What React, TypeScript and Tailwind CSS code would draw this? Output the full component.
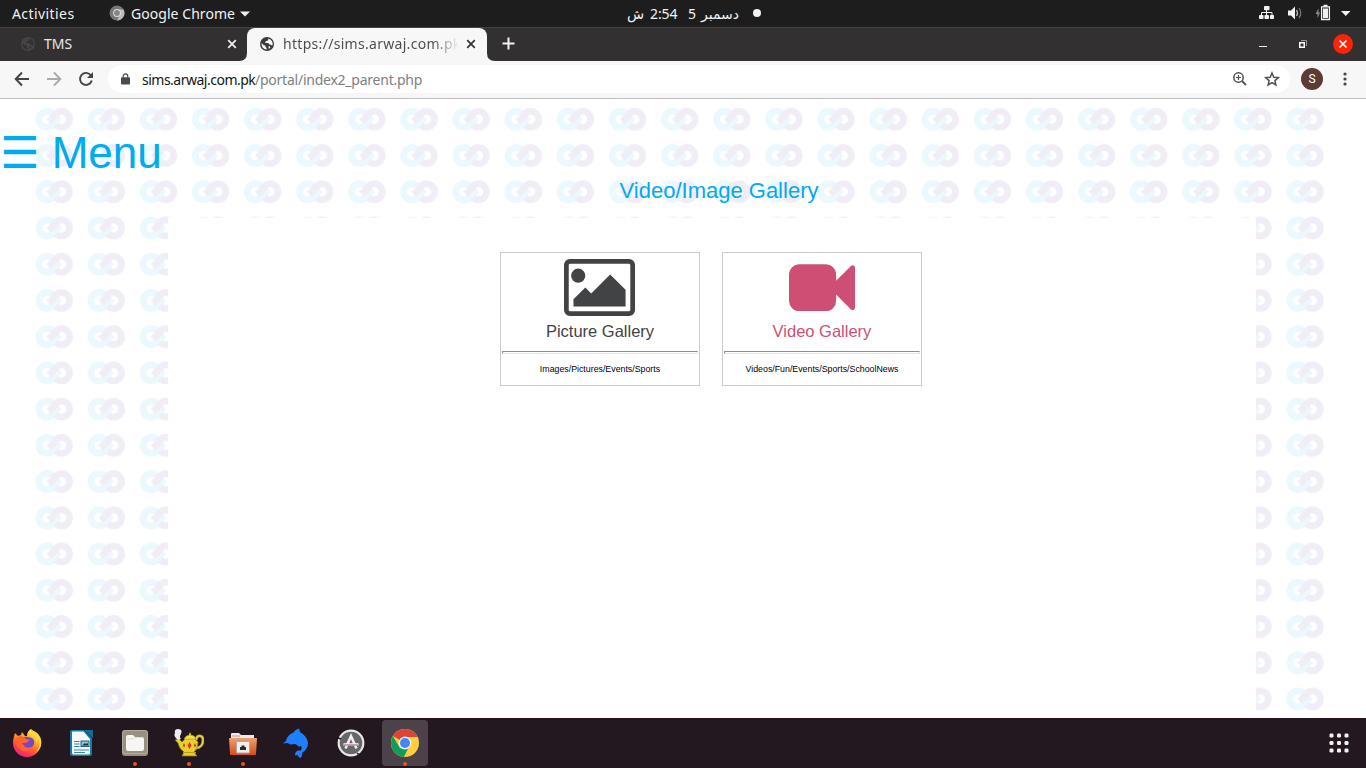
import type { ReactNode } from "react";

const ubuntu = "font-['Noto_Sans','Open_Sans',sans-serif]";

function Globe({ fill, cut }: { fill: string; cut: string }) {
  return (
    <svg width="14" height="14" viewBox="0 0 14 14" className="shrink-0">
      <circle cx="7" cy="7" r="7" fill={fill} />
      <path d="M1.500 6 3.800 8.300l1.600.1v1.300l1.200 1.300v1.600A5.700 5.700 0 0 1 1.500 6zM8.300 1.400v1.400L7.200 4.100H5.700v1.100l-.9.9h3.500l1 1.300h1.100l.8.800h1.400A5.800 5.800 0 0 0 8.300 1.400zM8.500 9.300h1.300l.5 1.500-1.500 1.200z" fill={cut} />
    </svg>
  );
}

function Cross({ color }: { color: string }) {
  return (
    <svg width="10" height="10" viewBox="0 0 10 10" className="shrink-0">
      <path d="M1.200 1.200l7.600 7.600M8.800 1.200 1.200 8.800" stroke={color} strokeWidth="1.700" />
    </svg>
  );
}

function TopBar() {
  return (
    <div className={`relative flex h-[27px] shrink-0 items-center bg-[#1d1d1d] text-[14px] leading-[27px] text-[#f2f2f2] ${ubuntu}`}>
      <span className="ml-3 w-[97px] whitespace-nowrap tracking-[0.42px]">Activities</span>
      <svg width="16" height="16" viewBox="0 0 16 16" className="mb-px shrink-0">
        <circle cx="8" cy="8" r="7.500" fill="#777" />
        <path d="M8 4.500h6.600A7.500 7.500 0 0 1 8 15.500l3-5.700z" fill="#bcbcbc" />
        <circle cx="8" cy="8" r="3.900" fill="#ddd" />
        <circle cx="8" cy="8" r="2.900" fill="#858585" />
      </svg>
      <span className="ml-1.5 w-[106px] whitespace-nowrap tracking-[0.05px]">Google Chrome</span>
      <svg width="10" height="6" viewBox="0 0 10 6" className="ml-[3px] shrink-0"><path d="M0 .5h10L5 5.500z" fill="#f2f2f2" /></svg>
      <div className="ml-[377px] flex w-[135px] items-center pb-px whitespace-nowrap font-['Noto_Sans','DejaVu_Sans',sans-serif]">
        <span className="w-[23px]">ش</span>
        <span className="w-[38px] tracking-[-0.1px]">2:54</span>
        <span className="w-3">5</span>
        <span className="w-[39px]" dir="rtl">دسمبر</span>
        <span className="ml-[14px] h-2 w-2 shrink-0 rounded-full bg-[#f2f2f2]" />
      </div>
      <svg width="108" height="27" viewBox="1258 0 108 27" className="ml-auto shrink-0">
        <g fill="#f2f2f2">
          <rect x="1264" y="6" width="5.500" height="4.200" rx=".8" />
          <rect x="1259" y="15" width="4.500" height="4" rx=".8" />
          <rect x="1264.500" y="15" width="4.500" height="4" rx=".8" />
          <rect x="1270" y="15" width="4" height="4" rx=".8" />
          <path d="M1288 10.500h3l4-4v13l-4-4h-3z" />
          <path d="M1341 11h9.500l-4.750 5z" />
          <rect x="1323" y="8.500" width="5" height="9.500" />
        </g>
        <path d="M1266.500 10v5M1261.500 15v-2.500h10.500V15" fill="none" stroke="#f2f2f2" />
        <path d="M1296.500 10q2 3 0 6" fill="none" stroke="#bbb" strokeWidth="1.300" />
        <path d="M1299 8q3.500 5 0 10" fill="none" stroke="#777" strokeWidth="1.300" />
        <path d="M1323.500 5.500h4M1321.600 6.800h7.800v12.700h-7.800z" fill="none" stroke="#f2f2f2" strokeWidth="1.300" />
        <path d="M1318.500 8.500l-3 5.500h2v4.500l2.500-6h-1.500z" fill="#8b8b8b" />
      </svg>
    </div>
  );
}

function TabStrip() {
  return (
    <div className={`flex h-[34px] shrink-0 border-t border-[#464344] bg-[#323031] text-[14px] leading-[33px] ${ubuntu}`}>
      <div className="flex w-[247px] items-center pb-[2px]">
        <span className="ml-[21px] flex"><Globe fill="#454545" cut="#323031" /></span>
        <span className="ml-[9px] text-[#e8e8e8]">TMS</span>
        <span className="mr-[10px] ml-auto flex"><Cross color="#f0f0f0" /></span>
      </div>
      <div className="relative flex w-[240px] items-center rounded-t-lg bg-[#f7f7f7] pb-[2px]">
        <svg width="8" height="8" viewBox="0 0 8 8" className="absolute bottom-0 -left-2"><path d="M8 0v8H0q8 0 8-8z" fill="#f7f7f7" /></svg>
        <svg width="8" height="8" viewBox="0 0 8 8" className="absolute -right-2 bottom-0"><path d="M0 0v8h8q-8 0-8-8z" fill="#f7f7f7" /></svg>
        <span className="ml-[13px] flex"><Globe fill="#3b3b3b" cut="#f7f7f7" /></span>
        <span className="ml-[9px] w-[176px] overflow-hidden bg-linear-to-r from-[#4a4a4a] from-85% to-transparent bg-clip-text whitespace-nowrap tracking-[0.3px] text-transparent">https://sims.arwaj.com.pk</span>
        <span className="ml-[7px] flex"><Cross color="#333" /></span>
      </div>
      <svg width="13" height="13" viewBox="0 0 13 13" className="mt-[9px] ml-[15px]"><path d="M6.500 .5v12M.5 6.500h12" stroke="#f3f3f3" strokeWidth="2" /></svg>
      <svg width="108" height="33" viewBox="1258 28 108 33" className="ml-auto">
        <path d="M1259 46.500h8" stroke="#eee" />
        <path d="M1301 40.500h5.500v5.500" fill="none" stroke="#999" />
        <rect x="1299.750" y="42.750" width="4.500" height="4.500" fill="none" stroke="#fff" strokeWidth="1.500" />
        <circle cx="1343" cy="44" r="10" fill="#ff2306" />
        <path d="M1339.500 40.500l7 7M1346.500 40.500l-7 7" stroke="#fff" strokeWidth="1.700" />
      </svg>
    </div>
  );
}

function Toolbar() {
  return (
    <div className="flex h-[38px] shrink-0 items-center border-b border-[#bdbdbd] bg-[#f7f7f7] pb-px">
      <svg width="108" height="36" viewBox="0 61 108 36" fill="none" strokeWidth="1.900" className="shrink-0">
        <path d="M29 79H16M22 72.500 15.700 79l6.300 6.500" stroke="#444" />
        <path d="M47 79h13M54 72.500 60.300 79 54 85.500" stroke="#aaa" />
        <path d="M91 75.500a6 6 0 1 0 .8 5" stroke="#444" />
        <path d="M93 72v6h-6z" fill="#444" />
      </svg>
      <div className="flex h-7 w-[1182px] shrink-0 items-center rounded-full bg-white">
        <svg width="9" height="12" viewBox="0 0 10 13" className="ml-[13px] shrink-0">
          <rect x="0" y="4.500" width="10" height="8" rx="1" fill="#4b4b4b" />
          <path d="M2.500 5V3.300a2.500 2.500 0 0 1 5 0V5" fill="none" stroke="#4b4b4b" strokeWidth="1.300" />
        </svg>
        <span className={`ml-3 text-[14px] whitespace-nowrap text-[#808080] ${ubuntu}`}>
          <span className="inline-block w-[113px] tracking-[-0.5px] text-[#151515]">sims.arwaj.com.pk</span>
          <span className="tracking-[-0.24px]">/portal/index2_parent.php</span>
        </span>
        <svg width="50" height="28" viewBox="1232 65 50 28" fill="none" stroke="#505050" className="mr-2 ml-auto shrink-0">
          <circle cx="1238.500" cy="77.500" r="4.700" strokeWidth="1.500" />
          <path d="M1242 81l4 4" strokeWidth="1.800" />
          <path d="M1236 77.500h5M1238.500 75v5" strokeWidth="1.200" />
          <path d="M1272 73l1.800 4.200 4.500.4-3.400 3 1 4.400-3.900-2.400-3.900 2.400 1-4.400-3.400-3 4.500-.4z" strokeWidth="1.500" />
        </svg>
      </div>
      <div className="ml-[11px] flex h-[22px] w-[22px] items-center justify-center rounded-full bg-[#5d3a33] font-['Roboto',sans-serif] text-[12px] text-white">S</div>
      <svg width="4" height="14" viewBox="0 0 4 14" fill="#444" className="ml-[20px]"><circle cx="2" cy="2" r="1.600" /><circle cx="2" cy="7" r="1.600" /><circle cx="2" cy="12" r="1.600" /></svg>
    </div>
  );
}

function Backdrop() {
  return (
    <svg width="1366" height="619" className="absolute inset-0">
      <defs>
        <pattern id="links" x="35.500" y="2" width="52.120" height="36.230" patternUnits="userSpaceOnUse">
          <g fill="none" strokeWidth="6.800">
            <circle cx="11.400" cy="18.300" r="8" stroke="#ebf8fe" />
            <circle cx="26" cy="18.300" r="8" stroke="#f1edf6" />
            <path d="M15.200 24.800l9-8.600" stroke="#ebf8fe" />
            <path d="M13.200 20.600l8.800-8" stroke="#f1edf6" />
          </g>
        </pattern>
      </defs>
      <rect x="35.500" y="2" width="1290" height="617" fill="url(#links)" />
    </svg>
  );
}

function Card({ title, caption, color, children }: { title: string; caption: string; color: string; children: ReactNode }) {
  return (
    <div className="flex h-[134px] w-[200px] flex-col items-center border border-[#ccc] bg-white px-px">
      <div className="flex h-[69px] items-center">{children}</div>
      <div className={`h-[29px] text-[16.5px] leading-[19px] ${color}`}>{title}</div>
      <div className="h-[3px] w-full border border-[#e5e5e5] border-t-[#8e8e8e] border-l-[#8e8e8e]" />
      <div className="mt-[10px] text-[8.800px] leading-[11px] text-black">{caption}</div>
    </div>
  );
}

function Page() {
  return (
    <main className="relative h-[619px] shrink-0 overflow-hidden bg-white font-['Liberation_Sans',Arial,sans-serif]">
      <Backdrop />
      <div className="relative flex h-full flex-col">
        <div className="mt-[29px] h-[49px] text-[44px] leading-[50px] whitespace-nowrap text-[#00abf0]">
          <span className="font-['DejaVu_Sans']">☰</span> Menu
        </div>
        <h1 className="h-[41px] pl-[72px] text-center text-[22px] leading-[27px] text-[#00abf0]">Video/Image Gallery</h1>
        <section className="ml-[168px] flex w-[1088px] flex-1 items-start gap-[22px] bg-white pt-[34px] pl-[332px]">
          <Card title="Picture Gallery" caption="Images/Pictures/Events/Sports" color="text-[#424344]">
            <svg width="72" height="57" viewBox="0 128 1946 1536" fill="#424344">
              <path d="M576 576q0 80-56 136t-136 56-136-56-56-136 56-136 136-56 136 56 56 136zM1664 960v448H256v-192l320-320 160 160 512-512zM1760 256H160q-13 0-22.500 9.500T128 288v1216q0 13 9.500 22.500t22.500 9.500h1600q13 0 22.500-9.500t9.500-22.500V288q0-13-9.500-22.500T1760 256zM1920 288v1216q0 66-47 113t-113 47H160q-66 0-113-47T0 1504V288q0-66 47-113t113-47h1600q66 0 113 47t47 113z" />
            </svg>
          </Card>
          <Card title="Video Gallery" caption="Videos/Fun/Events/Sports/SchoolNews" color="text-[#cf4f74]">
            <svg width="66" height="47.500" viewBox="0 256 1792 1280" fill="#cf4f74">
              <path d="M1792 352v1088q0 42-39 59-13 5-25 5-27 0-45-19l-403-403v166q0 119-84.500 203.500T992 1536H288q-119 0-203.500-84.500T0 1248V544q0-119 84.500-203.500T288 256h704q119 0 203.500 84.500T1280 544v165l403-402q18-19 45-19 12 0 25 5 39 17 39 59z" />
            </svg>
          </Card>
        </section>
      </div>
    </main>
  );
}

const icons: { name: string; open?: boolean; active?: boolean; art: ReactNode }[] = [
  {
    name: "firefox",
    art: (
      <>
        <defs>
          <linearGradient id="ff" x1=".8" y1="0" x2=".25" y2="1"><stop offset=".15" stopColor="#ffdf43" /><stop offset=".5" stopColor="#ff8424" /><stop offset=".78" stopColor="#ff3850" /><stop offset="1" stopColor="#e92083" /></linearGradient>
        </defs>
        <path d="M3 6l3 3 3-1 1-3 3 4 2 0c0-4 2-6 4-7 1 4 4 5 5 7 1-1 1-2 1-3 3 4 4 7 4 10a14 14 0 0 1-28 0c0-4 1-7 2-10z" fill="url(#ff)" />
        <path d="M10 11q3-2 6-1l4 1q3 2 2 6-2 5-7 5-6-1-6-6l4-1 2-2-4-1z" fill="#7049c9" />
        <path d="M4 11q4-3 8-1l2 2 4 1-4 3-4 0 3 4q5 2 9-2-3 8-11 6-6-3-7-9z" fill="#ff6330" />
        <path d="M19 2c0 7 6 6 5 14 2-2 2-4 1-6 4 6 3 11-1 15 7-4 7-14 1-19-2-2-4-2-6-4z" fill="#ffd638" />
      </>
    ),
  },
  {
    name: "writer",
    art: (
      <>
        <path d="M6 3h12l8 8v16q0 2-2 2H6q-2 0-2-2V5q0-2 2-2z" fill="#1679a8" />
        <path d="M6.500 4.500h11l6.500 7.500V26q0 1.500-1.500 1.500h-15q-1.500 0-1.500-1.500V5.500q0-1 .5-1z" fill="#f4f8fa" />
        <path d="M18 3h9v8z" fill="#126b98" />
        <path d="M8 14.500h5.500M8 17h5.500M8 19.500h5.500M8 23h15M8 25.500h11" stroke="#3d85aa" strokeWidth="1.200" />
        <rect x="15" y="14" width="8" height="5.500" fill="#86c5e5" stroke="#285f7b" />
        <path d="M16 18.500l3-2.500 1 1 2-1v2.500z" fill="#28313a" />
      </>
    ),
  },
  {
    name: "files",
    open: true,
    art: (
      <>
        <rect x="2" y="3" width="26" height="26" rx="3" fill="#99917f" />
        <rect x="2.500" y="3.500" width="25" height="23" rx="3" fill="none" stroke="#b4ad9f" />
        <path d="M8 8h5l2 2h7q2 0 2 2v10q0 2-2 2H8q-2 0-2-2V10q0-2 2-2z" fill="#f7f6f4" />
        <path d="M7 12h6l2-1.500h8" fill="none" stroke="#dedbd4" />
      </>
    ),
  },
  {
    name: "lamp",
    open: true,
    art: (
      <>
        <path d="M22 13c1-6 7-5 7 0s-3 8-7 8" fill="none" stroke="#b49d27" strokeWidth="2.800" />
        <path d="M22 13c1-6 7-5 7 0s-3 8-7 8" fill="none" stroke="#ecd643" strokeWidth="1.400" />
        <path d="M1 13l4-1 3 3 4-4h8l4 4q0 7-4 10l3 4H8l2-4q-5-3-6-9z" fill="#e5d02c" stroke="#8c7913" strokeWidth=".8" />
        <path d="M10 12q2-4 6-4 5 0 6 4z" fill="#f4e44f" stroke="#a89420" strokeWidth=".6" />
        <path d="M16 5l1.200 3h-2.400z" fill="#ebda43" />
        <path d="M9 25.500h13" stroke="#b99e1f" />
        <path d="M4 13Q-1 9 1 6q-1-4 3-4 5 0 3 5-2 3 0 5z" fill="#ecedf4" />
        <path d="M15.500 15l2 3.500-2 3.500-2-3.500zM10 16l1.200 2.500-1.200 2-1.200-2zM21 16l1.200 2.500-1.200 2-1.200-2z" fill="#df3030" />
      </>
    ),
  },
  {
    name: "network-folder",
    open: true,
    art: (
      <>
        <defs><linearGradient id="folder" x1="0" y1="0" x2="0" y2="1"><stop stopColor="#e8a373" /><stop offset="1" stopColor="#dc4b12" /></linearGradient></defs>
        <path d="M3 7q0-1 1-1h7l2 2h13v9H3z" fill="#eeeae8" />
        <path d="M4 9h8" stroke="#f4b8ad" strokeWidth="2" />
        <path d="M1 11h28l-1 16q0 1-1 1H3q-1 0-1-1z" fill="url(#folder)" />
        <rect x="8.500" y="14.500" width="13" height="11.500" rx="1" fill="#eee" stroke="#aaa" />
        <path d="M12 23v-3h1.500v-1.500h3V20H18v3z" fill="#292d22" />
      </>
    ),
  },
  {
    name: "dolphin",
    art: <path d="M.8 16.500 4 14Q5 8 11.500 5.500 13 2.500 17 1.500L18 5q7 4 8 11 0 6-5.500 9.500L19.500 30 18 31l-3-3-2 .5q0-4 3-5h3q1.500-3-.5-5l-1 1.500-4-3-5 .5-3-1.500z" fill="#1f80ff" />,
  },
  {
    name: "updater",
    art: (
      <>
        <circle cx="15" cy="16" r="13.400" fill="#ecebeb" />
        <circle cx="15" cy="16" r="11.300" fill="#686667" />
        <path d="M1 10.500l4 1.500M21 26l3 2.500" stroke="#231720" strokeWidth="1.600" />
        <path d="M9.500 21.500 15 9l5.500 12.500" fill="none" stroke="#f3f2f2" strokeWidth="2.500" />
        <path d="M7.500 17.500h15" stroke="#f4eff5" strokeWidth="2.600" />
        <path d="M8 18h14" stroke="#925189" />
      </>
    ),
  },
  {
    name: "chrome",
    open: true,
    active: true,
    art: (
      <>
        <circle cx="15" cy="16" r="14" fill="#ffcd40" />
        <path d="M15 16L2.900 9A14 14 0 0 1 27.600 10H15z" fill="#db4437" />
        <path d="M2.900 9l7 12 5 1 4-2-5 10A14 14 0 0 1 2.900 9z" fill="#0f9d58" />
        <circle cx="15" cy="16" r="6.400" fill="#f1f1f1" />
        <circle cx="15" cy="16" r="5" fill="#4285f4" />
      </>
    ),
  },
];

function Dock() {
  return (
    <footer className="flex h-[50px] shrink-0 items-start bg-[#231720] px-1 pt-[2px]">
      <div className="flex gap-2">
        {icons.map((item) => (
          <div key={item.name} className={`relative flex h-[46px] w-[46px] justify-center rounded pt-[7px] ${item.active ? "bg-[#4c434a]" : ""}`}>
            <svg width="30" height="32" viewBox="0 0 30 32">{item.art}</svg>
            {item.open && <span className="absolute bottom-0 left-[21px] h-1 w-1 rounded-full bg-[#e95420]" />}
          </div>
        ))}
      </div>
      <svg width="20" height="20" viewBox="0 0 20 20" fill="#f3f1f2" className="mt-[13px] mr-[13px] ml-auto">
        {Array.from({ length: 9 }, (_, i) => <rect key={i} x={0.500 + (i % 3) * 7.500} y={0.500 + Math.floor(i / 3) * 7.500} width="4" height="4" rx="1.200" />)}
      </svg>
    </footer>
  );
}

export default function App() {
  return (
    <div className="flex h-[768px] w-[1366px] flex-col overflow-hidden">
      <TopBar />
      <TabStrip />
      <Toolbar />
      <Page />
      <Dock />
    </div>
  );
}
